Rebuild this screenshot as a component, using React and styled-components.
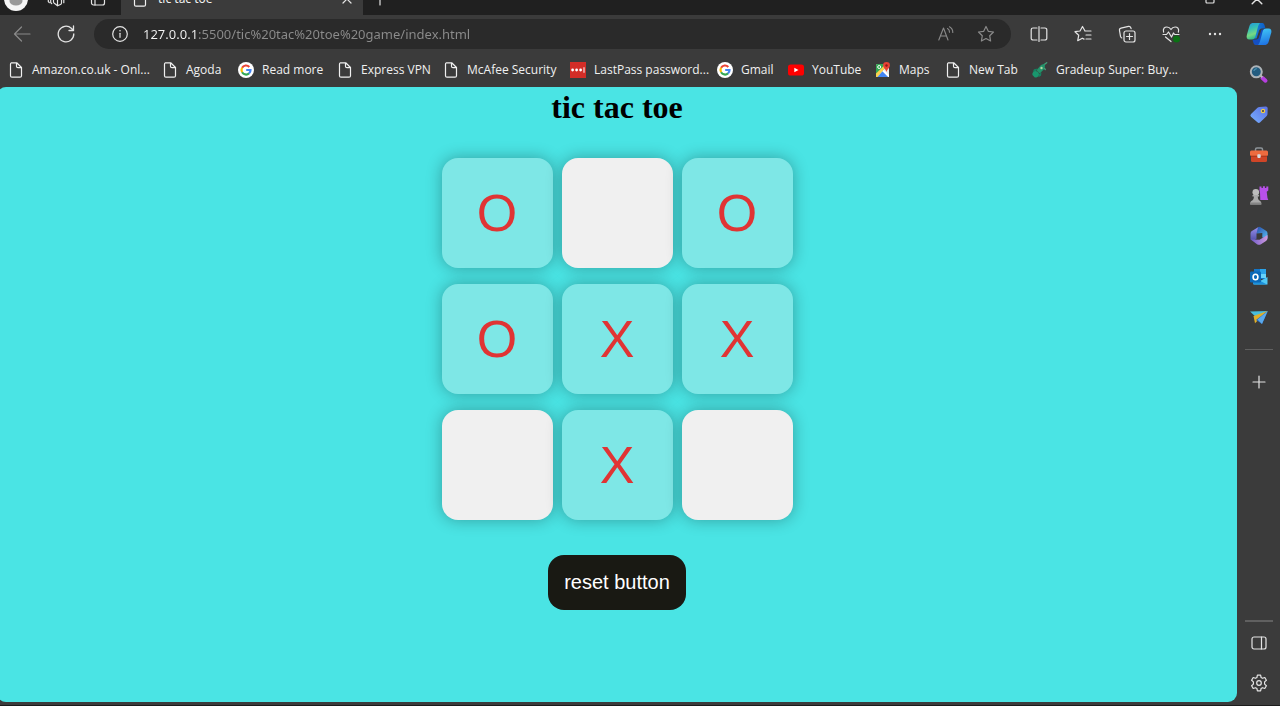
import React, { useState } from "react";
import styled, { createGlobalStyle } from "styled-components";

const UI_FONT = '"Segoe UI", "Noto Sans", "Open Sans", sans-serif';

const GlobalStyle = createGlobalStyle`
  * { box-sizing: border-box; }
  body { margin: 0; background: #3b3b3b; font-family: ${UI_FONT}; }
  button { font-family: inherit; }
  svg { display: block; flex: none; }
`;

const Window = styled.div`
  display: flex;
  flex-direction: column;
  min-height: 100vh;
  background: #3b3b3b;
  border-bottom: 1px solid #1c1c1c;
`;

/* ---------- tab strip ---------- */

const TabStrip = styled.div`
  display: flex;
  align-items: flex-end;
  height: 15px;
  overflow: hidden;
  background: #202020;
`;

const StripButton = styled.button`
  display: flex;
  align-items: center;
  justify-content: center;
  flex: none;
  width: ${(p) => p.$width || 42}px;
  height: 32px;
  padding: 0;
  border: 0;
  background: none;
  color: #e4e4e4;
`;

const Avatar = styled.svg`
  margin-right: 4px;
`;

const Tab = styled.div`
  display: flex;
  align-items: center;
  flex: none;
  gap: 10px;
  width: 242px;
  height: 32px;
  margin-left: 2px;
  padding-left: 11px;
  background: #3b3b3b;
  color: #f2f2f2;
  font-size: 12px;
  line-height: 16px;
`;

const TabTitle = styled.span`
  flex: 1;
`;

const Spacer = styled.div`
  flex: 1;
`;

/* ---------- toolbar ---------- */

const Toolbar = styled.div`
  display: flex;
  align-items: center;
  height: 38px;
`;

const ToolButton = styled.button`
  display: flex;
  align-items: center;
  justify-content: center;
  flex: none;
  width: ${(p) => p.$width || 44}px;
  height: 30px;
  padding: 0;
  border: 0;
  background: none;
  color: ${(p) => (p.$dim ? "#8a8a8a" : "#e4e4e4")};
`;

const AddressBar = styled.div`
  display: flex;
  align-items: center;
  flex: 1;
  height: 30px;
  margin: 0 6px;
  padding: 0 5px 0 18px;
  border-radius: 15px;
  background: #2a2a2a;
  color: #e4e4e4;
`;

const AddressInput = styled.input`
  flex: 1;
  min-width: 0;
  height: 24px;
  margin-left: 15px;
  padding: 0;
  border: 0;
  outline: 0;
  color: #8c8c8c;
  font-family: ${UI_FONT};
  font-size: 13px;
  background: linear-gradient(to right, #f4f4f4 55px, #8c8c8c 55px);
  background-clip: text;
  -webkit-background-clip: text;
  -webkit-text-fill-color: transparent;
`;

/* ---------- body ---------- */

const Body = styled.div`
  display: flex;
  flex: 1;
`;

const Content = styled.div`
  display: flex;
  flex-direction: column;
  flex: 1;
  min-width: 0;
`;

const Bookmarks = styled.nav`
  display: flex;
  align-items: center;
  height: 34px;
  padding-left: 8px;
`;

const Bookmark = styled.a`
  display: flex;
  align-items: center;
  gap: 8px;
  flex: none;
  width: ${(p) => p.$width}px;
  color: #f0f0f0;
  font-family: "Segoe UI", "Open Sans", "Noto Sans", sans-serif;
  font-size: 12px;
  line-height: 16px;
  white-space: nowrap;
  text-decoration: none;
`;

const Page = styled.main`
  display: flex;
  flex-direction: column;
  align-items: center;
  flex: 1;
  margin: 0 0 3px -3px;
  padding-bottom: 16px;
  border-radius: 9px;
  background: #4ae4e4;
`;

const Title = styled.h1`
  margin: 0;
  color: #000;
  font: bold 32px/40px "Times New Roman", "Liberation Serif", serif;
`;

const Board = styled.div`
  display: grid;
  grid-template-columns: repeat(3, 111px);
  grid-auto-rows: 110px;
  gap: 16px 9px;
  margin: 31px 0 35px;
`;

const Cell = styled.button`
  padding: 0;
  border: 0;
  border-radius: 16px;
  background: ${(p) => (p.$filled ? "#7ee7e6" : "#f0f0f0")};
  box-shadow: 0 0 16px rgba(0, 0, 0, 0.3);
  color: #e03434;
  font: 52px/58px Arial, "Liberation Sans", sans-serif;
`;

const ResetButton = styled.button`
  padding: 16px;
  border: 0;
  border-radius: 16px;
  background: #191913;
  color: #fff;
  font: 20px/23px Arial, "Liberation Sans", sans-serif;
`;

/* ---------- sidebar ---------- */

const Sidebar = styled.aside`
  display: flex;
  flex-direction: column;
  align-items: center;
  flex: none;
  width: 43px;
  padding: 11px 0 12px;
`;

const AppList = styled.div`
  display: flex;
  flex-direction: column;
  justify-content: space-between;
  height: 263px;
`;

const SideButton = styled.button`
  display: flex;
  align-items: center;
  justify-content: center;
  width: 28px;
  height: 20px;
  padding: 0;
  border: 0;
  background: none;
  color: #e4e4e4;
`;

const Divider = styled.hr`
  width: 28px;
  height: ${(p) => p.$size || 1}px;
  margin: 0;
  border: 0;
  background: #606060;
`;

const SideGroup = styled.div`
  display: flex;
  flex-direction: column;
  align-items: center;
  gap: ${(p) => p.$gap}px;
  padding-top: ${(p) => p.$top || 0}px;
`;

/* ---------- icons ---------- */

const Line = ({ size = 18, box = 18, width = 1.2, children }) => (
  <svg width={size} height={size} viewBox={`0 0 ${box} ${box}`} fill="none" stroke="currentColor"
    strokeWidth={width} strokeLinecap="round" strokeLinejoin="round" aria-hidden="true">
    {children}
  </svg>
);

const DocIcon = () => (
  <Line size={16} box={16} width={1.2}>
    <path d="M3.5 .8h5.2l4.8 4.7v8.2a1.5 1.5 0 0 1-1.5 1.5H4a1.5 1.5 0 0 1-1.5-1.5V2.300a1.500 1.500 0 0 1 1-1.500zM8.500 1v3.200a1.500 1.500 0 0 0 1.500 1.500h3.300" />
  </Line>
);

const GoogleIcon = () => (
  <svg width="16" height="16" viewBox="0 0 16 16" fill="none" strokeWidth="2.2" aria-hidden="true">
    <circle cx="8" cy="8" r="8" fill="#fff" />
    <path d="M11.300 4.900A4.500 4.500 0 0 0 4.100 5.800" stroke="#ea4335" />
    <path d="M4.100 5.800a4.500 4.500 0 0 0 0 4.400" stroke="#fbbc05" />
    <path d="M4.100 10.200a4.500 4.500 0 0 0 6.900 1.200" stroke="#34a853" />
    <path d="M11 11.400A4.500 4.500 0 0 0 12.500 8H8.200" stroke="#4285f4" />
  </svg>
);

const LastPassIcon = () => (
  <svg width="16" height="16" viewBox="0 0 16 16" aria-hidden="true">
    <path fill="#d32d27" d="M0 0h16v16H0z" />
    <g fill="#fff">
      <circle cx="2.600" cy="8" r="1.400" /><circle cx="6.600" cy="8" r="1.400" /><circle cx="10.600" cy="8" r="1.400" />
      <path d="M13.500 5.200h1v5.600h-1z" />
    </g>
  </svg>
);

const YouTubeIcon = () => (
  <svg width="16" height="16" viewBox="0 0 16 16" aria-hidden="true">
    <rect y="2.500" width="16" height="11" rx="2.600" fill="#f00" />
    <path fill="#fff" d="M6.300 5.700v4.600L10.500 8z" />
  </svg>
);

const MapsIcon = () => (
  <svg width="16" height="16" viewBox="0 0 16 16" aria-hidden="true">
    <rect x="1" y="2" width="13" height="13" rx="1.500" fill="#e8e8e8" />
    <path fill="#34a853" d="M2.500 2H10v4L2 14.500 1 13V3.500A1.500 1.500 0 0 1 2.500 2z" />
    <path fill="#fbd34d" d="m1 11.500 8.500-8.200 1.500 2L2.500 15H1z" />
    <path fill="#4285f4" d="M7.500 9.200 13.500 15h-11z" />
    <path fill="#fff" d="m7.500 9.200 1.200-1.300L14 13v2h-.8z" />
    <circle cx="4.200" cy="5" r="1.500" fill="none" stroke="#fff" />
    <path fill="#e94235" d="M11.500 0a3.400 3.400 0 0 1 3.400 3.500c0 2.500-2.600 3.300-3.400 6.500-.8-3.200-3.400-4-3.400-6.500A3.400 3.400 0 0 1 11.500 0z" />
    <circle cx="11.500" cy="3.500" r="1.200" fill="#8e1c15" />
  </svg>
);

const RocketIcon = () => (
  <svg width="16" height="16" viewBox="0 0 16 16" aria-hidden="true">
    <path fill="#23936a" d="M9 3 13 1.500l-.3 5L7.800 11.500 4.500 8.200z" />
    <path fill="#168060" d="M5.500 6.500 2 7.200.8 9.800l3-.2zm4 4-.5 3.300-2.600 1.500.2-3z" />
    <path fill="#19966d" d="M1.200 10c1.700-1.600 4.600-.9 5.500 1 .8 1.900-.3 4.100-2.200 4.400-1.300.2-2.600-.3-2.800-1.200-1.600-.7-1.800-3-.5-4.200z" />
    <circle cx="9.500" cy="6" r="1.200" fill="#b5d7a2" />
    <path stroke="#43a078" strokeWidth="1.300" strokeLinecap="round" d="m13 2 1.700-1.300M12.500 6.500l.8 1" />
  </svg>
);

const CopilotIcon = () => (
  <svg width="26" height="24" viewBox="0 0 26 24" aria-hidden="true">
    <defs>
      <linearGradient id="copLeft" x1="0" y1="0" x2=".3" y2="1">
        <stop offset="0" stopColor="#2394df" /><stop offset=".4" stopColor="#35bfb5" />
        <stop offset=".75" stopColor="#77d982" /><stop offset="1" stopColor="#35bb8c" />
      </linearGradient>
      <linearGradient id="copRight" x1=".4" y1="0" x2=".6" y2="1">
        <stop offset="0" stopColor="#40c5f5" /><stop offset="1" stopColor="#1d70e3" />
      </linearGradient>
      <linearGradient id="copTop" x1="0" y1="0" x2="1" y2="0">
        <stop offset="0" stopColor="#1a8fe0" /><stop offset="1" stopColor="#0d5ac4" />
      </linearGradient>
    </defs>
    <path fill="url(#copTop)" d="M6 1h9.500c3 0 3 2 4 5.500h-3.500c-2 0-2.700 1-3.500 4l-2 6H7z" />
    <path fill="#144fc2" d="M20 23h-9.500c-3 0-3-2-4-5.500h3.500c2 0 2.700-1 3.500-4l2-6H19z" />
    <path fill="url(#copLeft)" d="M7.500 1H14c-1.300 1-1.800 3-2.500 5.500l-2 7.500c-.7 2.500-1.500 3.500-4 3.500H3.600C.9 17.500.1 15.500.9 12.700l2.300-8C4 2 5 1 7.500 1z" />
    <path fill="url(#copRight)" d="M18.500 23H12c1.300-1 1.800-3 2.500-5.500l2-7.500c.7-2.500 1.500-3.500 4-3.500h1.900c2.700 0 3.500 2 2.700 4.800l-2.300 8C22 22 21 23 18.500 23z" />
  </svg>
);

const SearchIcon = () => (
  <svg width="20" height="20" viewBox="0 0 20 20" aria-hidden="true">
    <path stroke="#b63fe0" strokeWidth="4" strokeLinecap="round" d="m13.500 14 3 2.700" />
    <path stroke="#bbb" strokeWidth="2" d="m11 11 2.300 2.300" />
    <circle cx="7.300" cy="7.800" r="5.500" fill="#245d80" stroke="#aeb4b8" strokeWidth="2" />
    <path d="M4.800 7a3 3 0 0 1 3-2.300" fill="none" stroke="#58a3bf" />
  </svg>
);

const TagIcon = () => (
  <svg width="20" height="20" viewBox="0 0 20 20" aria-hidden="true">
    <defs><linearGradient id="tag" x1="1" y1="0" x2="0" y2="1"><stop offset="0" stopColor="#5b70e4" /><stop offset="1" stopColor="#78b0ff" /></linearGradient></defs>
    <path fill="url(#tag)" d="m10.500 2 6-.5a2 2 0 0 1 2.200 2l-.2 5.500c0 .8-.3 1.400-.8 1.900l-6.500 6.300a2 2 0 0 1-2.800 0L2 11.700a2 2 0 0 1 0-2.800l6.500-6.200c.5-.5 1.200-.7 2-.7z" />
    <circle cx="14" cy="6" r="1.600" fill="#34344e" stroke="#f4cc41" strokeWidth="1.300" />
  </svg>
);

const ToolboxIcon = () => (
  <svg width="20" height="20" viewBox="0 0 20 20" aria-hidden="true">
    <path d="M6.500 6V4.500A1.500 1.500 0 0 1 8 3h4a1.500 1.500 0 0 1 1.500 1.500V6" fill="none" stroke="#8d9499" strokeWidth="1.500" />
    <rect x="2" y="9" width="16" height="8" rx="1.500" fill="#cf4527" />
    <rect x="1" y="5.500" width="18" height="5.500" rx="1.500" fill="#ed6b3f" />
    <path fill="#a5341c" d="M2 10.700h16v1H2z" />
    <rect x="8.300" y="9.300" width="3.400" height="3.600" rx=".8" fill="#d8dbe0" />
  </svg>
);

const ChessIcon = () => (
  <svg width="20" height="20" viewBox="0 0 20 20" aria-hidden="true">
    <path fill="#b850ea" d="M10.500.500h2v1.500h1.400V.300h2V2h1.400V.500h2v4l-1.600 1.300.8 6.200.8 2h-8l-.3-7.500L10.500 4.500z" />
    <circle cx="6.800" cy="6.200" r="3.300" fill="#bcbcbc" />
    <path fill="#aaa" d="M3.500 9h6.600v1.500H8.800c0 2.500.6 3.500 2.300 4.500.9.500 1.200 1.500 1.200 3.500H1.200c0-2 .3-3 1.200-3.500 1.800-1 2.500-2 2.500-4.500H3.500z" />
    <path fill="#858585" d="M1.200 16.500h11.100v2H1.200z" />
  </svg>
);

const M365Icon = () => (
  <svg width="20" height="20" viewBox="0 0 20 20" aria-hidden="true">
    <defs>
      <linearGradient id="m1" x1="0" y1="0" x2="0" y2="1"><stop offset="0" stopColor="#9a91ed" /><stop offset="1" stopColor="#5150a9" /></linearGradient>
      <linearGradient id="m2" x1="0" y1="0" x2="1" y2="1"><stop offset="0" stopColor="#274da9" /><stop offset="1" stopColor="#58bdf4" /></linearGradient>
      <linearGradient id="m3" x1="0" y1="0" x2="1" y2="0"><stop offset="0" stopColor="#6d5bc8" /><stop offset="1" stopColor="#cf99df" /></linearGradient>
    </defs>
    <path fill="url(#m1)" d="M9.500 1 3.300 4.700A3 3 0 0 0 1.500 7.500v6l2.800 1.200 3.200-1.900V7.500L12.500 4z" />
    <path fill="url(#m2)" d="M9 1.200a2.500 2.500 0 0 1 2.500 0l5.500 3.500a3 3 0 0 1 1.500 2.600v5.200l-5.200-1V7L7.500 7.500z" />
    <path fill="url(#m3)" d="m1.700 13.500 6.300 4.700c1.300.8 2.700.8 4 0l5-3.300a3 3 0 0 0 1.500-2.600V9L10.500 13.700z" />
  </svg>
);

const OutlookIcon = () => (
  <svg width="20" height="20" viewBox="0 0 20 20" aria-hidden="true">
    <path fill="#1476c8" d="M5 2h12v10H5z" />
    <path fill="#2ba3e9" d="M11 2h6v5h-6z" />
    <path fill="#65d2fb" d="M11 7h6v4h-6z" />
    <path fill="#50c8f5" d="m4 10 7 4 7.500-4v7.500H5.500A1.500 1.500 0 0 1 4 16z" />
    <path fill="#1c91dc" d="m4 10 14 7.500H5.500A1.500 1.500 0 0 1 4 16z" />
    <rect x="1" y="4.500" width="11" height="11" rx="1.200" fill="#0a69b8" />
    <ellipse cx="6.500" cy="10" rx="2.400" ry="2.700" fill="none" stroke="#fff" strokeWidth="1.600" />
  </svg>
);

const PlaneIcon = () => (
  <svg width="20" height="20" viewBox="0 0 20 20" aria-hidden="true">
    <path fill="#47bddc" d="M1 4.500 18.800 4 8 11z" />
    <path fill="#e0ae28" d="m4.500 9 14-5L6 16.200z" />
    <path fill="#2367bd" d="M18.800 4 7 13l6 4z" />
    <path fill="#5aa9ec" d="M18.800 4 8.500 12.500 13 17z" />
  </svg>
);

const PlusIcon = ({ size = 14 }) => <Line size={size} box={14}><path d="M7 1v12M1 7h12" /></Line>;

const icons = {
  doc: <DocIcon />, google: <GoogleIcon />, lastpass: <LastPassIcon />,
  youtube: <YouTubeIcon />, maps: <MapsIcon />, rocket: <RocketIcon />,
};

const bookmarks = [
  { label: "Amazon.co.uk - Onl...", icon: "doc", width: 154 },
  { label: "Agoda", icon: "doc", width: 76 },
  { label: "Read more", icon: "google", width: 99 },
  { label: "Express VPN", icon: "doc", width: 106 },
  { label: "McAfee Security", icon: "doc", width: 127 },
  { label: "LastPass password...", icon: "lastpass", width: 147 },
  { label: "Gmail", icon: "google", width: 71 },
  { label: "YouTube", icon: "youtube", width: 87 },
  { label: "Maps", icon: "maps", width: 70 },
  { label: "New Tab", icon: "doc", width: 87 },
  { label: "Gradeup Super: Buy...", icon: "rocket", width: 150 },
];

const sideApps = [
  ["Search", SearchIcon], ["Shopping", TagIcon], ["Tools", ToolboxIcon], ["Games", ChessIcon],
  ["Microsoft 365", M365Icon], ["Outlook", OutlookIcon], ["Drop", PlaneIcon],
];

function TabBar() {
  return (
    <TabStrip>
      <StripButton $width={35} aria-label="Profile">
        <Avatar width="24" height="24" viewBox="0 0 24 24">
          <circle cx="12" cy="12" r="12" fill="#f5f5f5" /><ellipse cx="12" cy="14" rx="6.500" ry="4.500" fill="#999" />
        </Avatar>
      </StripButton>
      <StripButton aria-label="Workspaces">
        <Line size={18}>
          <path d="M6.500 3.500v8.500a1.500 1.500 0 0 0 .8 1.300l3.200 2.500V6.500zM10.500 15.800l3-1.300a1.500 1.500 0 0 0 1-1.400V4M3.700 5v7.500l1 1.200M1.300 7v4.500l1 1.200M16.800 5.500v7.200" />
        </Line>
      </StripButton>
      <StripButton aria-label="Tab actions">
        <Line size={16} box={16}><rect x="1.500" y="1.500" width="13" height="12.500" rx="2" /><path d="M1.500 5h13M5 5v9" /></Line>
      </StripButton>
      <Tab>
        <DocIcon />
        <TabTitle>tic tac toe</TabTitle>
        <StripButton $width={32} aria-label="Close tab"><Line size={10} box={10}><path d="m1 1 8 8m0-8L1 9" /></Line></StripButton>
      </Tab>
      <StripButton $width={34} aria-label="New tab"><PlusIcon /></StripButton>
      <Spacer />
      <StripButton $width={48} aria-label="Maximize"><Line size={10} box={10}><rect x="1" y="1" width="8" height="8" rx="1" /></Line></StripButton>
      <StripButton $width={46} aria-label="Close window"><Line size={12} box={10}><path d="m1 1 8 8m0-8L1 9" /></Line></StripButton>
    </TabStrip>
  );
}

function AddressRow() {
  return (
    <Toolbar>
      <ToolButton $dim aria-label="Back"><Line><path d="M17 9H1.500M8.500 2 1.500 9l7 7" /></Line></ToolButton>
      <ToolButton aria-label="Refresh">
        <Line width={1.300}><path d="M16.800 9A7.800 7.800 0 1 1 14.300 3.300L16.500 5.500M16.500 1v4.500H12" /></Line>
      </ToolButton>
      <AddressBar>
        <Line size={16} box={16}><circle cx="8" cy="8" r="7.300" /><path d="M8 7.300v4" /><path d="M8 4.700v.1" strokeWidth="1.600" /></Line>
        <AddressInput aria-label="Address" defaultValue="127.0.0.1:5500/tic%20tac%20toe%20game/index.html" />
        <ToolButton $width={40} $dim aria-label="Read aloud">
          <Line size={16} box={16} width={1.100}><path d="m.8 14 4.700-12 4.500 12M2.400 10h6M9.500 2.500a4 4 0 0 1 2 3.700M11.500.8a6.500 6.500 0 0 1 3.300 5.700" /></Line>
        </ToolButton>
        <ToolButton $width={40} $dim aria-label="Add to favorites">
          <Line><path d="m9 1.500 2.300 4.800 5.200.7-3.800 3.700.9 5.300L9 13.500 4.400 16l.9-5.300L1.500 7l5.200-.7z" /></Line>
        </ToolButton>
      </AddressBar>
      <ToolButton aria-label="Split screen">
        <Line><path d="M7 3H3a1.800 1.800 0 0 0-1.800 1.800v8.400A1.800 1.800 0 0 0 3 15h4M11 3h4a1.800 1.800 0 0 1 1.800 1.800v8.400A1.800 1.800 0 0 1 15 15h-4M9 1.500v15" /></Line>
      </ToolButton>
      <ToolButton aria-label="Favorites">
        <Line><path d="M11 6h6M12 10h5M12 14h5M11 6 8.500 1.500 6 6 1 6.700l3.700 3.600-1 5.400 4.600-2.500 1.700.9" /></Line>
      </ToolButton>
      <ToolButton aria-label="Collections">
        <Line><rect x="6" y="6" width="11" height="11" rx="2" /><path d="M11.500 8.500v6M8.500 11.500h6M3.800 13A2 2 0 0 1 2.500 11.300L1.500 5.500A2 2 0 0 1 3 3.200l7.500-1.800a2 2 0 0 1 2.300 1.300l.3.900" /></Line>
      </ToolButton>
      <ToolButton aria-label="Browser essentials">
        <Line>
          <path d="M1.600 7.200C.6 3.500 2.700 2 4.900 2 7 2 8.200 3.200 9 4.500 9.800 3.200 11 2 13.100 2c2.200 0 4.300 1.500 3.300 5.200M1 9.500h3.500L6.500 7l3 5 2-4 1.200 1.500H17M3.500 12 9 16.500" />
          <circle cx="14.500" cy="14" r="3.500" fill="#0b7014" stroke="none" />
        </Line>
      </ToolButton>
      <ToolButton aria-label="Settings and more">
        <Line><g fill="currentColor" stroke="none"><circle cx="4" cy="9" r="1.200" /><circle cx="9" cy="9" r="1.200" /><circle cx="14" cy="9" r="1.200" /></g></Line>
      </ToolButton>
      <ToolButton $width={43} aria-label="Copilot"><CopilotIcon /></ToolButton>
    </Toolbar>
  );
}

function Game() {
  const [cells, setCells] = useState(["O", "", "O", "O", "X", "X", "", "X", ""]);
  const [next, setNext] = useState("O");

  const play = (i) => {
    if (cells[i]) return;
    setCells(cells.map((c, n) => (n === i ? next : c)));
    setNext(next === "O" ? "X" : "O");
  };

  const reset = () => {
    setCells(Array(9).fill(""));
    setNext("O");
  };

  return (
    <Page>
      <Title>tic tac toe</Title>
      <Board>
        {cells.map((mark, i) => (
          <Cell key={i} $filled={!!mark} aria-label={mark ? undefined : `Empty square ${i + 1}`} onClick={() => play(i)}>
            {mark}
          </Cell>
        ))}
      </Board>
      <ResetButton onClick={reset}>reset button</ResetButton>
    </Page>
  );
}

export default function App() {
  return (
    <Window>
      <GlobalStyle />
      <TabBar />
      <AddressRow />
      <Body>
        <Content>
          <Bookmarks aria-label="Favorites bar">
            {bookmarks.map((b) => (
              <Bookmark key={b.label} href="#" $width={b.width}>{icons[b.icon]}{b.label}</Bookmark>
            ))}
          </Bookmarks>
          <Game />
        </Content>
        <Sidebar>
          <AppList>
            {sideApps.map(([name, Icon]) => (
              <SideButton key={name} aria-label={name}><Icon /></SideButton>
            ))}
          </AppList>
          <SideGroup $gap={22} $top={22}>
            <Divider />
            <SideButton aria-label="Customize"><PlusIcon /></SideButton>
          </SideGroup>
          <Spacer />
          <SideGroup $gap={11}>
            <Divider $size={2} />
            <SideGroup $gap={20}>
              <SideButton aria-label="Hide sidebar">
                <Line size={16} box={16}><rect x="1" y="2" width="14" height="12" rx="2" /><path d="M10.500 2v12" /></Line>
              </SideButton>
              <SideButton aria-label="Settings">
                <Line>
                  <path d="M7.400 1.200h3.200l.5 2.300 1.400.8 2.300-.8 1.600 2.800-1.800 1.600v2.200l1.800 1.600-1.600 2.800-2.300-.8-1.400.8-.5 2.300H7.400l-.5-2.300-1.400-.8-2.300.8-1.600-2.800 1.800-1.600V7.900L1.600 6.300l1.600-2.800 2.300.8 1.400-.8z" />
                  <circle cx="9" cy="9" r="2.300" />
                </Line>
              </SideButton>
            </SideGroup>
          </SideGroup>
        </Sidebar>
      </Body>
    </Window>
  );
}
